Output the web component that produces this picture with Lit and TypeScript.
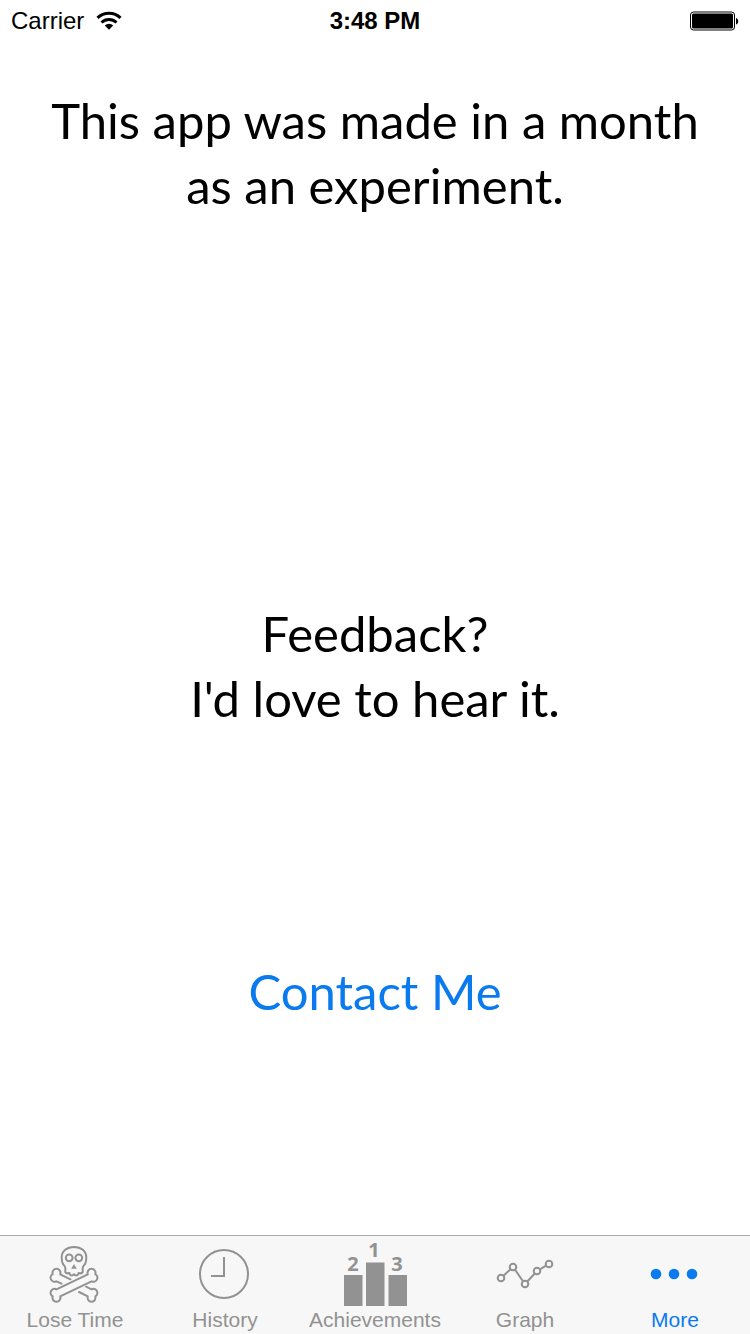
import { LitElement, html, css, svg } from "lit";
import { customElement, state } from "lit/decorators.js";

const skull = svg`
  <g fill="none" stroke="currentColor" stroke-width="2" stroke-linejoin="round" stroke-linecap="round">
    <path d="M22.3 30V26C22.3 24 20.6 23.500 19.700 21.500C18.900 19.500 18.700 17.500 18.700 15.500C18.700 9 23.800 5 31 5S43.300 9 43.300 15.500C43.300 17.500 43.100 19.500 42.300 21.500C41.400 23.500 39.700 24 39.700 26V30C39 31.500 37 31.500 35.500 31C35.500 33 33.800 33.700 33 33.500C32 33.400 31.500 32.800 31 32.200C30.500 32.800 30 33.400 29 33.500C28.200 33.700 26.500 33 26.500 31C25 31.500 23 31.500 22.300 30z"/>
    <circle cx="26.200" cy="15.800" r="3.400"/>
    <circle cx="35.800" cy="15.800" r="3.400"/>
    <path d="M13.500 47.300L44.800 32.300A4 4 0 1 1 52.300 32.200A4 4 0 1 1 48.500 39.300L17.200 54.300A4 4 0 1 1 9.700 54.400A4 4 0 1 1 13.500 47.300z"/>
    <path d="M27.500 37.300L17.200 32.300A4 4 0 1 0 9.700 32.200A4 4 0 1 0 13.500 39.300L18.500 41.700"/>
    <path d="M36 50L44.800 54.300A4 4 0 1 0 52.300 54.400A4 4 0 1 0 48.500 47.300L43 44.700"/>
  </g>
  <path fill="currentColor" d="M31 22l-2.800 4.800h5.600z"/>`;

const clock = svg`
  <g fill="none" stroke="currentColor" stroke-width="2">
    <circle cx="31" cy="32" r="24"/>
    <path d="M31 15v19H18"/>
  </g>`;

const podium = svg`
  <g fill="currentColor">
    <path d="M1 33h18.500v31H1zM23 20.500h18.500V64H23zM45.500 33H64v31H45.500z"/>
    <g font-family="Open Sans, sans-serif" font-size="20" font-weight="700" text-anchor="middle">
      <text x="10" y="29">2</text><text x="31" y="15">1</text><text x="54" y="29">3</text>
    </g>
  </g>`;

const graph = svg`
  <g fill="none" stroke="currentColor" stroke-width="2">
    <circle cx="8" cy="36" r="3.300"/><circle cx="20" cy="25" r="3.300"/>
    <circle cx="32" cy="42" r="3.300"/><circle cx="44" cy="29" r="3.300"/>
    <circle cx="56" cy="22" r="3.300"/>
    <path d="M10.500 33.700l7-6.400M22 27.700l8 11.500M34.300 39.500l7.500-8M47 27.300l6-3.600"/>
  </g>`;

const dots = svg`
  <g fill="currentColor">
    <circle cx="13" cy="32" r="5.300"/><circle cx="31" cy="32" r="5.300"/><circle cx="49" cy="32" r="5.300"/>
  </g>`;

const tabs = [
  { label: "Lose Time", icon: skull },
  { label: "History", icon: clock },
  { label: "Achievements", icon: podium },
  { label: "Graph", icon: graph },
  { label: "More", icon: dots },
];

@customElement("app-root")
export class AppRoot extends LitElement {
  static styles = css`
    :host {
      display: flex;
      flex-direction: column;
      min-height: 100vh;
      background: #fff;
      color: #000;
      font-family: "Liberation Sans", Arial, sans-serif;
    }
    .status {
      display: grid;
      grid-template-columns: 1fr auto 1fr;
      align-items: center;
      padding: 0 11px;
      font-size: 24px;
      line-height: 41px;
    }
    .carrier { display: flex; align-items: center; gap: 12px; }
    .time { font-weight: 700; }
    .battery { justify-self: end; }
    svg { display: block; }
    main {
      flex: 1;
      display: grid;
      grid-template-rows: 513fr 357fr 276fr;
      padding-top: 47px;
      text-align: center;
      font-family: Lato, sans-serif;
      font-size: 49px;
      line-height: 65px;
    }
    p { margin: 0; padding: 0 40px; }
    a { color: #0a7aef; text-decoration: none; }
    nav {
      display: grid;
      grid-template-columns: repeat(5, 1fr);
      background: #f7f7f7;
      border-top: 1px solid #acacac;
    }
    .tab {
      display: flex;
      flex-direction: column;
      align-items: center;
      padding: 0;
      border: 0;
      background: none;
      color: #929292;
      font-family: inherit;
      font-size: 21px;
      line-height: 28px;
      cursor: pointer;
    }
    .tab[aria-current="page"] { color: #0a7aef; }
  `;

  @state() private active = "More";

  render() {
    return html`
      <header class="status">
        <span class="carrier">Carrier
          <svg width="26" height="20" viewBox="0 0 26 20" aria-hidden="true">
            <g fill="none" stroke="#000" stroke-width="3">
              <path d="M1.500 6.800a16.500 16.500 0 0 1 23 0"/>
              <path d="M5.500 11.500a11 11 0 0 1 15 0"/>
            </g>
            <path d="M13 18.800l-4.200-4.300a6 6 0 0 1 8.400 0z"/>
          </svg>
        </span>
        <span class="time">3:48 PM</span>
        <svg class="battery" width="50" height="20" viewBox="0 0 50 20" aria-hidden="true">
          <rect x="1.500" y="1" width="44" height="18" rx="3" fill="none" stroke="#000"/>
          <rect x="3" y="2.500" width="41" height="15" rx="1.500"/>
          <path d="M47 7c3 .500 3 6 0 6.500z"/>
        </svg>
      </header>
      <main>
        <p>This app was made in a month<br>as an experiment.</p>
        <p>Feedback?<br>I'd love to hear it.</p>
        <p><a href="mailto:">Contact Me</a></p>
      </main>
      <nav>
        ${tabs.map((t) => html`
          <button class="tab" aria-current=${this.active === t.label ? "page" : "false"}
            @click=${() => { this.active = t.label; }}>
            <svg width="64" height="70" viewBox="0 -6 64 70" aria-hidden="true">${t.icon}</svg>
            <span>${t.label}</span>
          </button>`)}
      </nav>`;
  }
}
